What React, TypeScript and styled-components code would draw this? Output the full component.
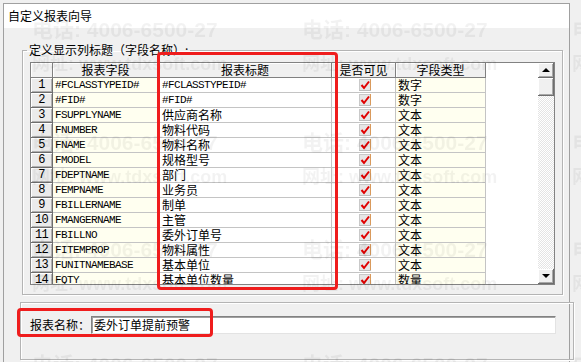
import React from 'react'
import styled, { createGlobalStyle } from 'styled-components'

const GlobalStyle = createGlobalStyle`
  html, body {
    margin: 0;
    padding: 0;
    background: #f0f0f0;
    overflow: hidden;
  }
  body {
    font-family: "Noto Sans CJK SC", "Liberation Sans", sans-serif;
    font-size: 12px;
    color: #000;
  }
`

type Row = { field: string; title: string; type: string }

const rows: Row[] = [
  { field: '#FCLASSTYPEID#', title: '#FCLASSTYPEID#', type: '数字' },
  { field: '#FID#', title: '#FID#', type: '数字' },
  { field: 'FSUPPLYNAME', title: '供应商名称', type: '文本' },
  { field: 'FNUMBER', title: '物料代码', type: '文本' },
  { field: 'FNAME', title: '物料名称', type: '文本' },
  { field: 'FMODEL', title: '规格型号', type: '文本' },
  { field: 'FDEPTNAME', title: '部门', type: '文本' },
  { field: 'FEMPNAME', title: '业务员', type: '文本' },
  { field: 'FBILLERNAME', title: '制单', type: '文本' },
  { field: 'FMANGERNAME', title: '主管', type: '文本' },
  { field: 'FBILLNO', title: '委外订单号', type: '文本' },
  { field: 'FITEMPROP', title: '物料属性', type: '文本' },
  { field: 'FUNITNAMEBASE', title: '基本单位', type: '文本' },
  { field: 'FQTY', title: '基本单位数量', type: '数量' },
]

const isLatin = (s: string) => /^[#A-Z0-9]+$/.test(s)

const App: React.FC = () => {
  return (
    <>
      <GlobalStyle />
      <Window>
        <TitleBar>自定义报表向导</TitleBar>
        <Body>
          <GroupBox>
            <Legend>定义显示列标题（字段名称）:</Legend>
            <Grid>
              <TableArea>
                <GridRow>
                  <HeadCell />
                  <HeadCell>报表字段</HeadCell>
                  <HeadCell>报表标题</HeadCell>
                  <HeadCell>是否可见</HeadCell>
                  <HeadCell>字段类型</HeadCell>
                </GridRow>
                {rows.map((row, i) => (
                  <GridRow key={row.field}>
                    <NumCell>{i + 1}</NumCell>
                    <Cell $cream $mono>{row.field}</Cell>
                    <Cell $mono={isLatin(row.title)} $pad={3}>
                      {row.title}
                    </Cell>
                    <Cell $center>
                      <CheckIcon />
                    </Cell>
                    <Cell $cream>{row.type}</Cell>
                  </GridRow>
                ))}
              </TableArea>
              <ScrollBar>
                <ScrollButton>
                  <Arrow $up />
                </ScrollButton>
                <Thumb />
                <Track />
                <ScrollButton>
                  <Arrow />
                </ScrollButton>
              </ScrollBar>
            </Grid>
          </GroupBox>
          <NameBox>
            <NameLabel>报表名称：</NameLabel>
            <NameInput>委外订单提前预警</NameInput>
          </NameBox>
        </Body>
        <Separator />
      </Window>
      <Watermark />
      <RedBox style={{ left: 157, top: 52, width: 181, height: 238 }} />
      <RedBox style={{ left: 17, top: 308, width: 196, height: 29 }} />
    </>
  )
}

export default App

const Window = styled.div`
  margin: 3px 0 0 3px;
  width: 565px;
  height: 365px;
  border: 1px solid #a0a0a0;
  border-bottom: none;
  background: #f0f0f0;
`

const TitleBar = styled.div`
  height: 24px;
  background: #fff;
  padding: 5px 0 0 4px;
  box-sizing: border-box;
  line-height: 14px;
`

const Body = styled.div`
  display: flex;
  flex-direction: column;
  align-items: flex-start;
`

const GroupBox = styled.fieldset`
  margin: 16px 0 0 18px;
  padding: 6px 7px 9px 7px;
  min-width: 0;
  border: 1px solid #b4b4b4;
  box-shadow: inset 1px 1px 0 #fff, 1px 1px 0 #fff;
`

const Legend = styled.legend`
  margin-left: -3px;
  padding: 0 2px;
  line-height: 12px;
  height: 12px;
`

const Grid = styled.div`
  display: flex;
  width: 523px;
  height: 221px;
  border: 1px solid #828282;
  background: #fff;
  overflow: hidden;
`

const TableArea = styled.div`
  flex: 1;
  overflow: hidden;
`

const GridRow = styled.div`
  display: grid;
  grid-template-columns: 22px 106px 173px 64px 90px;
  height: 15px;
`

const HeadCell = styled.div`
  box-sizing: border-box;
  background: #f0f0f0;
  border-right: 1px solid #808080;
  border-bottom: 1px solid #808080;
  box-shadow: inset 1px 1px 0 #fff;
  text-align: center;
  line-height: 14px;
`

const NumCell = styled.div`
  box-sizing: border-box;
  background: #ebebeb;
  border-right: 1px solid #6e6e6e;
  border-bottom: 1px solid #6e6e6e;
  box-shadow: inset 1px 1px 0 #fff, inset -1px -1px 0 #b0b0b0;
  text-align: center;
  font-family: "Liberation Mono", monospace;
  font-size: 12px;
  letter-spacing: -0.6px;
  line-height: 14px;
`

const Cell = styled.div<{ $cream?: boolean; $mono?: boolean; $center?: boolean; $pad?: number }>`
  box-sizing: border-box;
  background: ${p => (p.$cream ? '#fffff0' : '#fff')};
  border-right: 1px solid #c4c4c4;
  border-bottom: 1px solid #c4c4c4;
  padding-left: ${p => (p.$pad ?? 2)}px;
  white-space: nowrap;
  overflow: hidden;
  line-height: 14px;
  display: ${p => (p.$center ? 'flex' : 'block')};
  justify-content: center;
  align-items: center;
  ${p =>
    p.$mono &&
    `
    font-family: "Liberation Mono", monospace;
    font-size: 11px;
    letter-spacing: -0.6px;
  `}
`

const CheckIcon: React.FC = () => (
  <svg width="12" height="12" viewBox="0 0 12 12">
    <rect x="0" y="0" width="12" height="12" fill="#c9c9c9" />
    <rect x="1" y="1" width="10" height="10" fill="#e6e6e6" />
    <rect x="11" y="0" width="1" height="12" fill="#d99a5c" />
    <rect x="0" y="11" width="12" height="1" fill="#bdbdbd" />
    <path d="M2.5 6 L5 9 L10 2.5" stroke="#e00000" strokeWidth="2" fill="none" />
  </svg>
)

const ScrollBar = styled.div`
  width: 16px;
  display: flex;
  flex-direction: column;
`

const ScrollButton = styled.div`
  box-sizing: border-box;
  height: 15px;
  background: #f0f0f0;
  border-right: 1px solid #6e6e6e;
  border-bottom: 1px solid #6e6e6e;
  box-shadow: inset 1px 1px 0 #fff, inset -1px -1px 0 #a8a8a8;
  display: flex;
  align-items: center;
  justify-content: center;
`

const Thumb = styled(ScrollButton)`
  height: 18px;
`

const Track = styled.div`
  flex: 1;
  background-color: #fff;
  background-image: repeating-conic-gradient(#e4e4e4 0 25%, #fff 0 50%);
  background-size: 2px 2px;
`

const Arrow = styled.div<{ $up?: boolean }>`
  width: 0;
  height: 0;
  border-left: 4px solid transparent;
  border-right: 4px solid transparent;
  ${p => (p.$up ? 'border-bottom: 4px solid #000;' : 'border-top: 4px solid #000;')}
`

const NameBox = styled.div`
  margin: 7px 0 0 16px;
  width: 543px;
  height: 43px;
  border: 1px solid #b4b4b4;
  box-shadow: inset 1px 1px 0 #fff, 1px 1px 0 #fff;
  display: flex;
  align-items: flex-start;
  padding: 13px 0 0 9px;
  box-sizing: content-box;
`

const NameLabel = styled.div`
  width: 61px;
  line-height: 18px;
`

const NameInput = styled.div`
  box-sizing: border-box;
  width: 465px;
  height: 18px;
  background: #fff;
  border-top: 1px solid #828282;
  border-left: 1px solid #828282;
  border-right: 1px solid #e3e3e3;
  border-bottom: 1px solid #e3e3e3;
  box-shadow: inset 1px 1px 0 #a0a0a0;
  padding-left: 2px;
  line-height: 16px;
`

const Separator = styled.div`
  margin-top: 9px;
  height: 1px;
  background: #a0a0a0;
  margin-left: 6px;
  margin-right: -6px;
`

const RedBox = styled.div`
  position: absolute;
  box-sizing: border-box;
  border: 3px solid #ef1d1d;
  border-radius: 4px;
  pointer-events: none;
`

const marks = [
  { x: 32, y: 20 },
  { x: 302, y: 20 },
  { x: 572, y: 20 },
  { x: 32, y: 133 },
  { x: 302, y: 133 },
  { x: 572, y: 133 },
  { x: 32, y: 240 },
  { x: 302, y: 240 },
  { x: 572, y: 240 },
  { x: 32, y: 355 },
  { x: 302, y: 355 },
  { x: 572, y: 355 },
]

const Watermark: React.FC = () => (
  <WatermarkLayer>
    {marks.map(m => (
      <Mark key={`${m.x}-${m.y}`} style={{ left: m.x, top: m.y }}>
        <Phone>电话: 4006-6500-27</Phone>
        <Url>网址: www.tdxsoft.com</Url>
      </Mark>
    ))}
  </WatermarkLayer>
)

const WatermarkLayer = styled.div`
  position: fixed;
  inset: 0;
  pointer-events: none;
  overflow: hidden;
`

const Mark = styled.div`
  position: absolute;
  display: flex;
  flex-direction: column;
  gap: 14px;
  color: rgba(0, 0, 0, 0.05);
  font-family: "Liberation Sans", "Noto Sans CJK SC", sans-serif;
  font-weight: bold;
  white-space: nowrap;
`

const Phone = styled.div`
  font-size: 21px;
  line-height: 20px;
`

const Url = styled.div`
  font-size: 18px;
  line-height: 20px;
`
